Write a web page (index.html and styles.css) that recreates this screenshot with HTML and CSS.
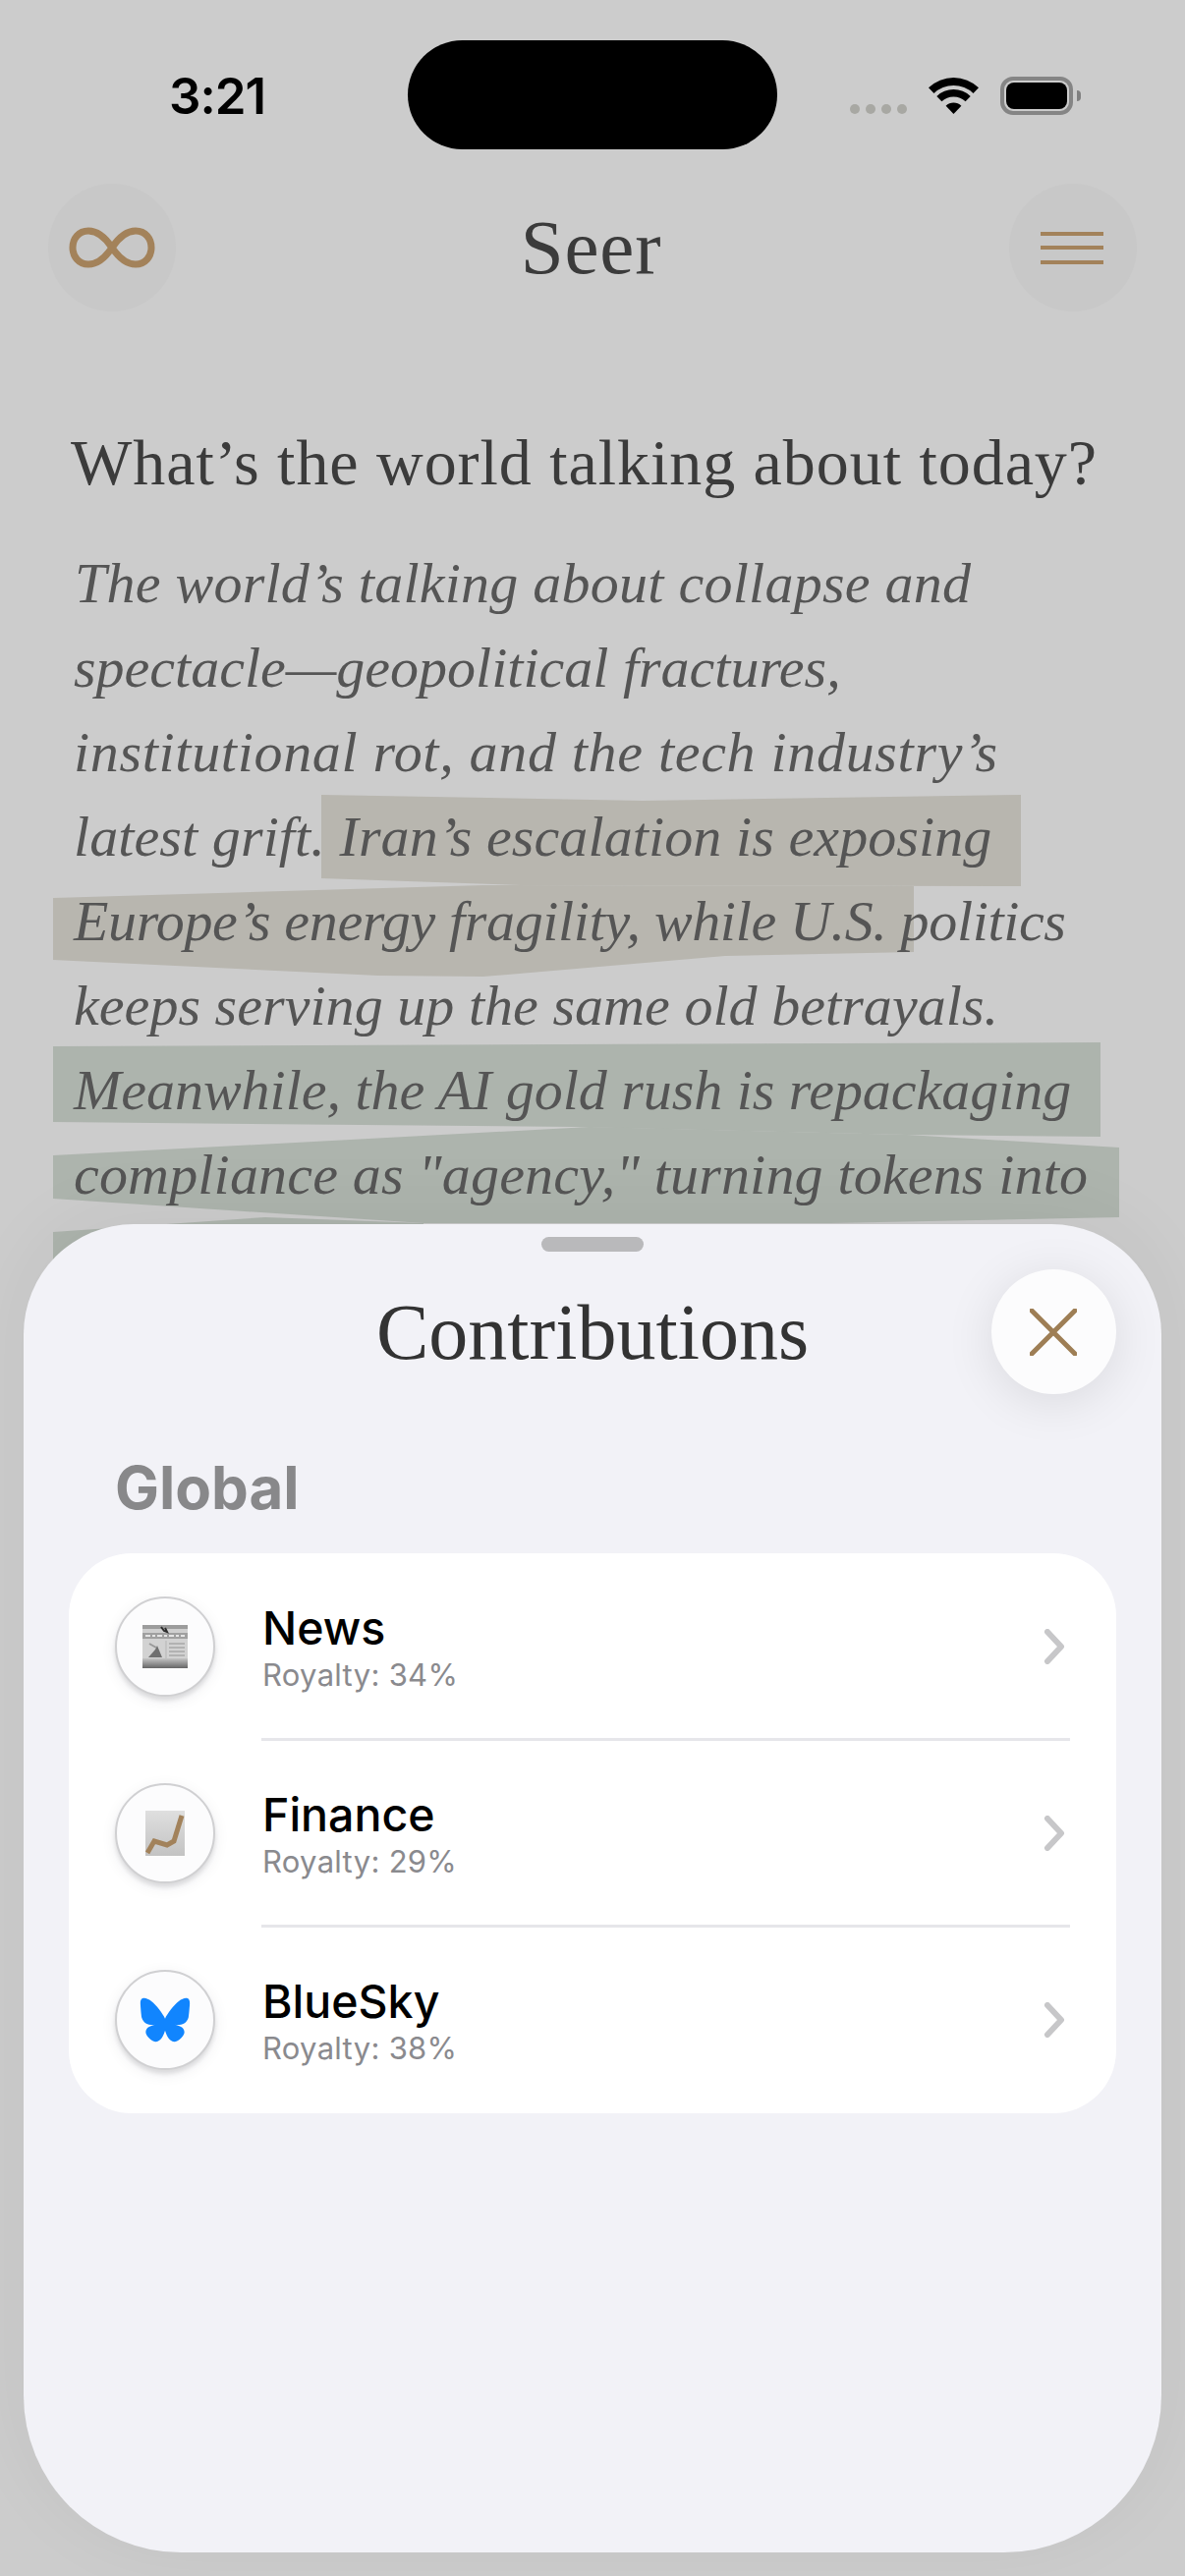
FILE: index.html
```html
<!DOCTYPE html>
<html lang="en">
<head>
  <meta charset="UTF-8" />
  <title>Seer</title>
  <link rel="stylesheet" href="styles.css">
</head>
<body>
  <svg class="marks" width="1206" height="1300" viewBox="0 0 1206 1300">
    <polygon class="mark-tan" points="327,809 654,815 1039,809 1039,902 530,901 327,894"/>
    <polygon class="mark-tan" points="54,914 492,901 930,902 930,969 738,973 492,994 385,993 54,977"/>
    <polygon class="mark-green" points="54,1065 1120,1061 1120,1157 923,1155 585,1147 54,1142"/>
    <polygon class="mark-green" points="54,1176 600,1147 923,1155 1139,1168 1139,1239 846,1245 431,1245 54,1220"/>
    <polygon class="mark-green" points="54,1254 270,1239 431,1245 431,1300 54,1300"/>
  </svg>

  <div class="status">
    <div class="time">3:21</div>
    <div class="island"></div>
    <div class="status-icons">
      <div class="signal"><i></i><i></i><i></i><i></i></div>
      <svg class="wifi" width="51" height="38" viewBox="0 0 51 38">
        <path d="M0 10.200A37 37 0 0 1 51 10.200L45.500 16A29 29 0 0 0 5.500 16Z"/>
        <path d="M8.300 18.900A25 25 0 0 1 42.700 18.900L37.600 24.300A17.500 17.500 0 0 0 13.400 24.300Z"/>
        <path d="M17.600 28.700A11.500 11.500 0 0 1 33.400 28.700L25.500 37Z"/>
      </svg>
      <div class="battery"><div class="battery-fill"></div></div>
    </div>
  </div>

  <header class="nav">
    <div class="round-btn">
      <svg width="90" height="42" viewBox="0 0 90 42" fill="none">
        <path d="M45 21C37 9 30 4 21 4 11 4 5 12 5 21s6 17 16 17c9 0 16-5 24-17s15-17 24-17c10 0 16 8 16 17s-6 17-16 17c-9 0-16-5-24-17Z"/>
      </svg>
    </div>
    <h1 class="app-title">Seer</h1>
    <div class="round-btn">
      <div class="burger"><i></i><i></i><i></i></div>
    </div>
  </header>

  <main class="reply">
    <h2 class="question">What’s the world talking about today?</h2>
    <p class="answer">
      <span class="line line-1">The world’s talking about collapse and</span>
      <span class="line line-2">spectacle—geopolitical fractures,</span>
      <span class="line line-3">institutional rot, and the tech industry’s</span>
      <span class="line line-4">latest grift. Iran’s escalation is exposing</span>
      <span class="line line-5">Europe’s energy fragility, while U.S. politics</span>
      <span class="line line-6">keeps serving up the same old betrayals.</span>
      <span class="line line-7">Meanwhile, the AI gold rush is repackaging</span>
      <span class="line line-8">compliance as "agency," turning tokens into</span>
    </p>
  </main>

  <section class="sheet">
    <div class="handle"></div>
    <h2 class="sheet-title">Contributions</h2>
    <button class="close">
      <svg width="48" height="48" viewBox="0 0 48 48"><path d="M2 2 46 46M46 2 2 46"/></svg>
    </button>
    <h3 class="group-label">Global</h3>
    <div class="card">
      <div class="row">
        <div class="avatar">
          <svg width="46" height="44" viewBox="0 0 46 44">
            <defs>
              <linearGradient id="paperFoot" x1="0" y1="0" x2="0" y2="1">
                <stop offset="0" stop-color="#c4c4c4"/>
                <stop offset="1" stop-color="#666"/>
              </linearGradient>
            </defs>
            <rect width="46" height="44" fill="#d2d2d2"/>
            <rect width="46" height="4" fill="#9c9c9c"/>
            <rect y="4" width="46" height="6" fill="#cfcfcf"/>
            <rect y="8" width="46" height="6" fill="#a0a0a0"/>
            <path d="M3 11H43" stroke="#e4e4e4" stroke-width="2" stroke-dasharray="5 2 3 2"/>
            <path d="M24 16V36" stroke="#b5b5b5" stroke-width="1"/>
            <path d="M6 33 13 25 15 21 20 33Z" fill="#6f6f6f"/>
            <path d="M7 19 14 23" stroke="#999" stroke-width="2"/>
            <path d="M27 19H43M27 23H43M27 27H43M27 31H43" stroke="#b2b2b2" stroke-width="2"/>
            <rect y="34" width="46" height="10" fill="url(#paperFoot)"/>
            <path d="M19 2 22 6 25 7 23 3" stroke="#2d2d2d" stroke-width="2" fill="none"/>
          </svg>
        </div>
        <div class="row-text">
          <div class="row-name">News</div>
          <div class="row-sub">Royalty: 34%</div>
        </div>
        <svg class="chevron" width="26" height="36" viewBox="0 0 26 36"><path d="M5 3 19 18 5 33"/></svg>
      </div>
      <div class="row">
        <div class="avatar">
          <svg width="40" height="46" viewBox="0 0 40 46">
            <defs>
              <linearGradient id="chartBack" x1="0" y1="0" x2="0" y2="1">
                <stop offset="0" stop-color="#dfdfdf"/>
                <stop offset="1" stop-color="#c3c3c3"/>
              </linearGradient>
            </defs>
            <rect width="40" height="46" fill="url(#chartBack)"/>
            <path d="M2 43 9 31 22 35 29 31 37 5" fill="none" stroke="#a2825b" stroke-width="5"/>
          </svg>
        </div>
        <div class="row-text">
          <div class="row-name">Finance</div>
          <div class="row-sub">Royalty: 29%</div>
        </div>
        <svg class="chevron" width="26" height="36" viewBox="0 0 26 36"><path d="M5 3 19 18 5 33"/></svg>
      </div>
      <div class="row">
        <div class="avatar">
          <svg width="52" height="46" viewBox="0 0 600 530">
            <path fill="#1185fe" d="M135.72 44.03C202.216 93.951 273.74 195.17 300 249.49c26.262-54.316 97.782-155.54 164.28-205.46C512.26 8.009 590-19.862 590 68.825c0 17.712-10.155 148.79-16.111 170.07-20.703 73.984-96.144 92.854-163.25 81.433 117.3 19.964 147.14 86.092 82.697 152.22-122.39 125.59-175.91-31.511-189.63-71.766-2.514-7.38-3.69-10.832-3.708-7.896-.017-2.936-1.193.516-3.707 7.896-13.714 40.255-67.233 197.36-189.63 71.766-64.444-66.128-34.605-132.26 82.697-152.22-67.108 11.421-142.55-7.45-163.25-81.433C20.15 217.613 9.997 86.535 9.997 68.825c0-88.687 77.742-60.816 125.72-24.795z"/>
          </svg>
        </div>
        <div class="row-text">
          <div class="row-name">BlueSky</div>
          <div class="row-sub">Royalty: 38%</div>
        </div>
        <svg class="chevron" width="26" height="36" viewBox="0 0 26 36"><path d="M5 3 19 18 5 33"/></svg>
      </div>
    </div>
  </section>
</body>
</html>
```

FILE: styles.css
```css
* {
  box-sizing: border-box;
}
body {
  margin: 0;
  width: 1206px;
  height: 2622px;
  position: relative;
  overflow: hidden;
  background: #ccc;
  font-family: 'Inter', 'Liberation Sans', sans-serif;
}
h1, h2, h3, p {
  margin: 0;
  font-weight: normal;
}

/* highlighter marks behind the answer */
.marks {
  position: absolute;
  left: 0;
  top: 0;
}
.mark-tan {
  fill: #b8b6af;
}
.mark-green {
  fill: #adb4ad;
}

.status {
  display: grid;
  grid-template-columns: 415px 376px 1fr;
  padding-top: 41px;
  position: relative;
}
.time {
  padding: 32px 0 0 172px;
  font-size: 51px;
  line-height: 50px;
  font-weight: 600;
  color: #000;
  letter-spacing: -1px;
}
.island {
  height: 111px;
  background: #000;
  border-radius: 56px;
}
.status-icons {
  display: flex;
  align-items: flex-start;
  padding: 37px 0 0 74px;
}
.signal {
  display: flex;
  gap: 6px;
  margin-top: 28px;
  margin-right: 22px;
}
.signal i {
  width: 10px;
  height: 10px;
  border-radius: 50%;
  background: #a8a8a3;
}
.wifi {
  fill: #000;
  margin: 1px 22px 0 0;
}
.battery {
  width: 74px;
  height: 39px;
  border: 4px solid #858585;
  border-radius: 13px;
  padding: 2px;
  position: relative;
}
.battery:after {
  content: "";
  position: absolute;
  right: -12px;
  top: 10px;
  width: 4px;
  height: 11px;
  border-radius: 0 5px 5px 0;
  background: #808080;
}
.battery-fill {
  height: 100%;
  background: #000;
  border-radius: 8px;
}

.nav {
  display: flex;
  align-items: center;
  justify-content: space-between;
  padding: 0 49px;
  margin-top: 35px;
  position: relative;
}
.round-btn {
  width: 130px;
  height: 130px;
  border-radius: 50%;
  background: #c8c8c8;
  display: flex;
  align-items: center;
  justify-content: center;
}
.round-btn svg path {
  stroke: #a3825a;
  stroke-width: 7;
}
.burger {
  width: 64px;
  margin-right: 2px;
  display: flex;
  flex-direction: column;
  gap: 10.500px;
}
.burger i {
  height: 4px;
  background: #a3825a;
}
.app-title {
  font-family: 'Liberation Serif', serif;
  font-size: 79px;
  line-height: 90px;
  letter-spacing: 0.800px;
  margin-left: -3px;
  color: #3b3b3b;
}

.reply {
  padding: 0 0 0 72px;
  margin-top: 119px;
  position: relative;
}
.question {
  font-family: 'Liberation Serif', serif;
  font-size: 66px;
  line-height: 70px;
  letter-spacing: 0.950px;
  color: #3b3b3b;
  white-space: nowrap;
}
.answer {
  font-family: 'Liberation Serif', serif;
  font-style: italic;
  font-size: 58px;
  line-height: 86px;
  color: #555;
  white-space: nowrap;
  margin: 45px 0 0 3px;
}
.line {
  display: block;
}
.line-1 { letter-spacing: 0.250px; margin-left: 1px; }
.line-2 { letter-spacing: 0; }
.line-3 { letter-spacing: 0.690px; }
.line-4 { letter-spacing: 0.100px; }
.line-5 { letter-spacing: -0.350px; }
.line-6 { letter-spacing: 0.050px; }
.line-7 { letter-spacing: -0.030px; }
.line-8 { letter-spacing: 0.170px; }

/* bottom sheet sits over the page */
.sheet {
  position: absolute;
  left: 24px;
  top: 1246px;
  width: 1158px;
  height: 1352px;
  background: #f2f2f7;
  border-radius: 112px 112px 160px 160px;
  box-shadow: 0 -10px 80px rgba(0, 0, 0, 0.05);
  padding: 13px 46px 0;
}
.handle {
  width: 104px;
  height: 15px;
  margin: 0 auto;
  border-radius: 8px;
  background: #b9b9bb;
}
.sheet-title {
  font-family: 'Liberation Serif', serif;
  font-size: 80px;
  line-height: 84px;
  text-align: center;
  color: #333;
  margin: 40px 0 -3px;
}
.close {
  position: absolute;
  right: 46px;
  top: 46px;
  width: 127px;
  height: 127px;
  border: none;
  padding: 0 2px 0 0;
  border-radius: 50%;
  background: #fcfcfd;
  box-shadow: 0 8px 50px rgba(0, 0, 0, 0.1);
  display: flex;
  align-items: center;
  justify-content: center;
}
.close path {
  stroke: #9e7e55;
  stroke-width: 5;
  stroke-linecap: round;
  fill: none;
}
.group-label {
  font-size: 60px;
  line-height: 72px;
  font-weight: 700;
  color: #88888a;
  padding-left: 47px;
  margin-top: 83px;
}
.card {
  margin-top: 31px;
  background: #fff;
  border-radius: 64px;
  padding: 0 47px;
}
.row {
  height: 190px;
  display: flex;
  align-items: center;
  position: relative;
}
.row + .row:before {
  content: "";
  position: absolute;
  left: 149px;
  right: 0;
  top: -2px;
  height: 3px;
  background: #e6e6ea;
}
.avatar {
  width: 102px;
  height: 102px;
  border-radius: 50%;
  background: #fcfcfd;
  border: 2px solid #d0d0d2;
  box-shadow: 0 4px 4px rgba(0, 0, 0, 0.1), 0 4px 16px rgba(0, 0, 60, 0.07);
  display: flex;
  align-items: center;
  justify-content: center;
  flex: none;
}
.row-text {
  flex: 1;
  margin-left: 48px;
}
.row-name {
  font-size: 46.500px;
  line-height: 52px;
  font-weight: 450;
  color: #000;
}
.row-sub {
  font-size: 31px;
  line-height: 34px;
  letter-spacing: 0.300px;
  margin-top: 5px;
  color: #8a8a8e;
}
.chevron {
  margin-right: 2px;
}
.chevron path {
  stroke: #c7c7c9;
  stroke-width: 6;
  stroke-linecap: round;
  stroke-linejoin: round;
  fill: none;
}
```
